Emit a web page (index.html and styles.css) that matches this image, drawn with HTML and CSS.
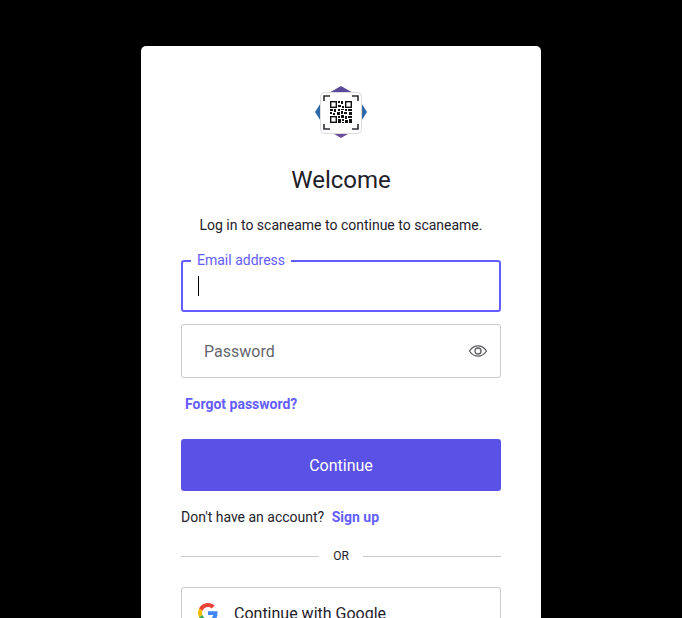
FILE: index.html
```html
<!DOCTYPE html>
<html lang="en">
<head>
    <meta charset="UTF-8">
    <meta name="viewport" content="width=device-width, initial-scale=1.0">
    <title>Log in | scaneame</title>
    <link rel="stylesheet" href="styles.css">
</head>
<body>
    <main class="card">
        <svg class="logo" width="52" height="52" viewBox="0 0 52 52">
            <!-- diamonds behind the white tile -->
            <path d="M26 0 L40 8 L12 8 Z" fill="#5b4a9a"/>
            <path d="M0 26 L7 15 L7 37 Z" fill="#2f6aa8"/>
            <path d="M52 26 L45 15 L45 37 Z" fill="#2f6aa8"/>
            <path d="M26 52 L14 45 L38 45 Z" fill="#6a4d9c"/>
            <rect x="5.5" y="6.5" width="41" height="41" rx="4" fill="#fff" stroke="#dcdce0"/>
            <!-- scan corners -->
            <path d="M9 15 V10 H15 M37 10 H43 V15 M43 38 V43 H37 M15 43 H9 V38" fill="none" stroke="#2b2b33" stroke-width="1.6"/>
            <!-- qr code -->
            <g fill="none" stroke="#111" stroke-width="1.4">
                <rect x="15.7" y="15.7" width="5.6" height="5.6"/>
                <rect x="30.7" y="15.7" width="5.6" height="5.6"/>
                <rect x="15.7" y="30.7" width="5.6" height="5.6"/>
            </g>
            <path fill="#111" d="M23 15h2v2h-2zM26 15h2v3h-2zM23 19h3v2h-3zM27 20h2v2h-2zM15 23h3v2h-3zM19 23h2v3h-2zM23 23h2v2h-2zM26 23h3v1h-3zM30 23h2v2h-2zM33 23h4v2h-4zM15 26h2v2h-2zM22 26h3v3h-3zM26 25h2v3h-2zM29 26h3v2h-3zM34 26h3v3h-3zM18 27h2v2h-2zM23 30h2v2h-2zM26 29h3v3h-3zM30 30h2v3h-2zM33 30h4v2h-4zM23 33h3v4h-3zM27 33h2v2h-2zM30 34h3v3h-3zM34 33h3v4h-3zM27 36h2v1h-2z"/>
        </svg>
        <h1 class="title">Welcome</h1>
        <p class="intro">Log in to scaneame to continue to scaneame.</p>

        <div class="field field-active">
            <span class="field-label">Email address</span>
            <span class="caret"></span>
        </div>
        <div class="field">
            <span class="placeholder">Password</span>
            <svg class="eye" width="20" height="20" viewBox="0 0 20 20" fill="none" stroke="#5c5c62" stroke-width="1.3">
                <path d="M1.5 10 C4 6.2 7 4.8 10 4.8 C13 4.8 16 6.2 18.5 10 C16 13.8 13 15.2 10 15.2 C7 15.2 4 13.8 1.5 10 Z"/>
                <circle cx="10" cy="10" r="3"/>
            </svg>
        </div>

        <a class="forgot" href="#">Forgot password?</a>
        <button class="btn-primary">Continue</button>

        <p class="signup">Don't have an account? <a href="#">Sign up</a></p>

        <div class="divider"><span>OR</span></div>

        <button class="btn-social">
            <svg width="20" height="20" viewBox="0 0 48 48">
                <path fill="#EA4335" d="M24 9.5c3.5 0 6.700 1.300 9.100 3.500l6.800-6.800C35.800 2.400 30.300 0 24 0 14.600 0 6.500 5.400 2.600 13.200l7.900 6.100C12.400 13.600 17.700 9.500 24 9.500z"/>
                <path fill="#4285F4" d="M46.900 24.500c0-1.600-.1-3.100-.4-4.500H24v9h12.900c-.6 3-2.200 5.500-4.800 7.200l7.700 6c4.500-4.200 7.100-10.300 7.100-17.700z"/>
                <path fill="#FBBC05" d="M10.500 28.700c-.5-1.500-.8-3-.8-4.700s.3-3.200.8-4.700l-7.900-6.100C.9 16.500 0 20.100 0 24s.9 7.500 2.600 10.800l7.900-6.100z"/>
                <path fill="#34A853" d="M24 48c6.500 0 11.900-2.100 15.800-5.800l-7.700-6c-2.100 1.400-4.900 2.300-8.100 2.300-6.300 0-11.600-4.100-13.500-9.800l-7.900 6.100C6.500 42.600 14.600 48 24 48z"/>
            </svg>
            <span>Continue with Google</span>
        </button>
    </main>
</body>
</html>
```

FILE: styles.css
```css
html, body {
    height: 100%;
}
body {
    margin: 0;
    background: #000;
    font-family: Roboto, Arial, sans-serif;
    color: #1e212a;
    overflow: hidden;
}
.card {
    width: 400px;
    box-sizing: border-box;
    margin: 46px auto 0;
    padding: 40px 40px 40px;
    background: #fff;
    border-radius: 5px;
    display: flex;
    flex-direction: column;
}
.logo {
    display: block;
    align-self: center;
}
.title {
    margin: 27px 0 0;
    font-size: 24px;
    line-height: 30px;
    font-weight: 400;
    text-align: center;
}
.intro {
    margin: 20px 0 0;
    font-size: 14px;
    line-height: 20px;
    text-align: center;
}
.field {
    position: relative;
    height: 54px;
    box-sizing: border-box;
    margin-top: 12px;
    border: 1px solid #c9cace;
    border-radius: 3px;
    display: flex;
    align-items: center;
    padding: 0 12px 0 22px;
}
.field-active {
    height: 52px;
    margin-top: 25px;
    border: 2px solid #635dff;
    padding-left: 15px;
}
.field-label {
    position: absolute;
    top: -10px;
    left: 8px;
    padding: 0 6px;
    background: #fff;
    font-size: 14px;
    line-height: 16px;
    color: #635dff;
}
.caret {
    width: 1px;
    height: 20px;
    background: #000;
}
.placeholder {
    font-size: 16px;
    color: #65676e;
}
.eye {
    margin-left: auto;
}
.forgot {
    margin: 17px 0 0 4px;
    font-size: 14px;
    line-height: 18px;
    font-weight: 700;
    color: #635dff;
    text-decoration: none;
}
.btn-primary {
    margin-top: 26px;
    height: 52px;
    border: 0;
    border-radius: 3px;
    background: #5a52e6;
    color: #fff;
    font-family: inherit;
    font-size: 16px;
}
.signup {
    margin: 17px 0 0;
    font-size: 14px;
    line-height: 18px;
}
.signup a {
    margin-left: 4px;
    font-weight: 700;
    color: #635dff;
    text-decoration: none;
}
.divider {
    margin-top: 22px;
    display: flex;
    align-items: center;
    gap: 14px;
    font-size: 12px;
    line-height: 16px;
}
.divider::before, .divider::after {
    content: "";
    flex: 1;
    height: 1px;
    background: #c9cace;
}
.btn-social {
    margin-top: 23px;
    height: 52px;
    border: 1px solid #c9cace;
    border-radius: 3px;
    background: #fff;
    color: #1e212a;
    font-family: inherit;
    font-size: 16px;
    display: flex;
    align-items: center;
    gap: 16px;
    padding: 0 16px;
    flex-shrink: 0;
}
```
